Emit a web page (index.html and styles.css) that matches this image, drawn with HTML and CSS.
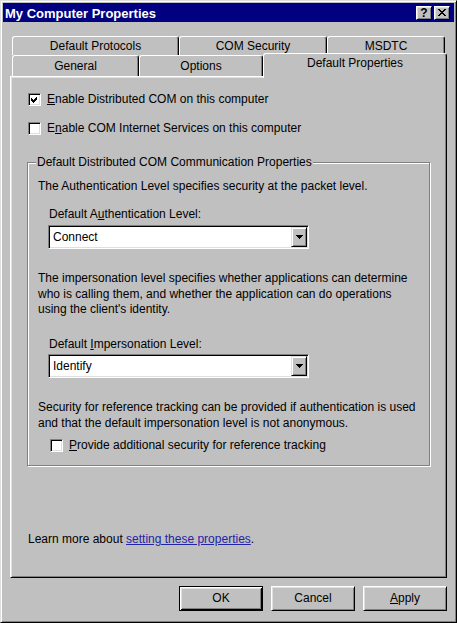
FILE: index.html
```html
<!DOCTYPE html>
<html lang="en">
<head>
<meta charset="utf-8">
<title>My Computer Properties</title>
<link rel="stylesheet" href="styles.css">
</head>
<body>
<div class="window">
  <div class="titlebar">
    <span class="title">My Computer Properties</span>
    <div class="tb-buttons">
      <span class="tbtn help">?</span>
      <span class="tbtn close"><svg width="8" height="7" viewBox="0 0 8 7" shape-rendering="crispEdges"><path d="M0 0h2v1h1v1h2v-1h1v-1h2v1h-1v1h-1v1h-1v1h1v1h1v1h1v1h-2v-1h-1v-1h-2v1h-1v1h-2v-1h1v-1h1v-1h1v-1h-1v-1h-1v-1h-1z" fill="#000"/></svg></span>
    </div>
  </div>
  <div class="client">
    <div class="tabs">
      <div class="tabrow back">
        <div class="tab w-protocols">Default Protocols</div>
        <div class="tab w-security">COM Security</div>
        <div class="tab w-msdtc">MSDTC</div>
      </div>
      <div class="tabrow front">
        <div class="tab w-general">General</div>
        <div class="tab w-options">Options</div>
        <div class="tab selected w-defprops">Default Properties</div>
      </div>
    </div>
    <div class="panel">
      <div class="check-row cb-top">
        <span class="checkbox"><svg width="11" height="11" viewBox="0 0 11 11" shape-rendering="crispEdges"><polygon points="2,4 4,6 8,2 8,5 4,9 2,7" fill="#000"/></svg></span>
        <span class="label"><u>E</u>nable Distributed COM on this computer</span>
      </div>
      <div class="check-row cb-second">
        <span class="checkbox"></span>
        <span class="label">E<u>n</u>able COM Internet Services on this computer</span>
      </div>
      <fieldset class="group">
        <legend>Default Distributed COM Communication Properties</legend>
        <p class="text p-auth">The Authentication Level specifies security at the packet level.</p>
        <div class="field-label fl-auth">Default A<u>u</u>thentication Level:</div>
        <div class="combo combo-auth">
          <span class="combo-value">Connect</span>
          <span class="combo-btn"><svg width="7" height="4" viewBox="0 0 7 4" shape-rendering="crispEdges"><path d="M0 0h7v1h-1v1h-1v1h-1v1h-1v-1h-1v-1h-1v-1h-1z" fill="#000"/></svg></span>
        </div>
        <p class="text p-imp">The impersonation level specifies whether applications can determine who is calling them, and whether the application can do operations using the client's identity.</p>
        <div class="field-label fl-imp">Default <u>I</u>mpersonation Level:</div>
        <div class="combo combo-imp">
          <span class="combo-value">Identify</span>
          <span class="combo-btn"><svg width="7" height="4" viewBox="0 0 7 4" shape-rendering="crispEdges"><path d="M0 0h7v1h-1v1h-1v1h-1v1h-1v-1h-1v-1h-1v-1h-1z" fill="#000"/></svg></span>
        </div>
        <p class="text p-sec">Security for reference tracking can be provided if authentication is used and that the default impersonation level is not anonymous.</p>
        <div class="check-row cb-ref">
          <span class="checkbox"></span>
          <span class="label"><u>P</u>rovide additional security for reference tracking</span>
        </div>
      </fieldset>
      <p class="learn">Learn more about <a class="link" href="#">setting these properties</a>.</p>
    </div>
    <div class="buttons">
      <span class="btn default">OK</span>
      <span class="btn">Cancel</span>
      <span class="btn"><u>A</u>pply</span>
    </div>
  </div>
</div>
</body>
</html>
```

FILE: styles.css
```css
* { box-sizing: border-box; }
html, body { margin: 0; padding: 0; }
body {
  width: 457px;
  height: 623px;
  overflow: hidden;
  background: #c0c0c0;
  font-family: "Liberation Sans", Arial, sans-serif;
  font-size: 12px;
  color: #000;
}
u { text-decoration: underline; text-underline-offset: 1px; }

.window {
  width: 457px;
  height: 623px;
  background: #c0c0c0;
  border: 1px solid;
  border-color: #dfdfdf #000 #000 #dfdfdf;
  box-shadow: inset 1px 1px #fff, inset -1px -1px #808080;
  padding: 2px;
  display: flex;
  flex-direction: column;
}

.titlebar {
  height: 19px;
  background: #000080;
  display: flex;
  align-items: center;
  justify-content: space-between;
  padding: 0 4px 0 2px;
}
.title {
  color: #fff;
  font-weight: bold;
  font-size: 13px;
  line-height: 19px;
  padding-top: 2px;
}
.tb-buttons { display: flex; gap: 2px; }
.tbtn {
  width: 16px;
  height: 14px;
  background: #c0c0c0;
  border: 1px solid;
  border-color: #fff #000 #000 #fff;
  box-shadow: inset 1px 1px #dfdfdf, inset -1px -1px #808080;
  display: flex;
  align-items: center;
  justify-content: center;
}
.help {
  font-weight: bold;
  font-size: 12px;
  line-height: 12px;
}

.client {
  flex: 1;
  display: flex;
  flex-direction: column;
  padding: 14px 7px 0 7px;
}

.tabs { display: flex; flex-direction: column; margin-left: 2px; }
.tabrow { display: flex; }
.tabrow.back { height: 19px; }
.tabrow.front { height: 21px; align-items: flex-end; }
.tab {
  background: #c0c0c0;
  border-top: 1px solid #fff;
  border-left: 1px solid #fff;
  border-right: 1px solid #000;
  border-radius: 3px 3px 0 0;
  box-shadow: inset -1px 0 #808080;
  text-align: center;
  white-space: nowrap;
}
.back .tab { height: 19px; line-height: 18px; }
.front .tab { height: 21px; line-height: 20px; }
.front .tab.selected {
  height: 25px;
  line-height: 19px;
  margin-bottom: -2px;
  position: relative;
  z-index: 2;
}
.w-protocols { width: 167px; }
.w-security { width: 148px; }
.w-msdtc { width: 118px; }
.w-general { width: 127px; }
.w-options { width: 124px; }
.w-defprops { width: 184px; }

.panel {
  height: 502px;
  border: 1px solid;
  border-color: #fff #000 #000 #fff;
  box-shadow: inset 1px 1px #dfdfdf, inset -1px -1px #808080;
  display: flex;
  flex-direction: column;
  align-items: flex-start;
}

.check-row {
  display: flex;
  align-items: center;
  gap: 6px;
  height: 15px;
  line-height: 15px;
  white-space: nowrap;
}
.cb-top { margin: 15px 0 0 17px; }
.cb-second { margin: 14px 0 0 17px; }
.cb-ref { margin: 7px 0 0 12px; }
.checkbox {
  width: 13px;
  height: 13px;
  flex: none;
  background: #fff;
  border: 1px solid;
  border-color: #808080 #fff #fff #808080;
  box-shadow: inset 1px 1px #000, inset -1px -1px #dfdfdf;
}
.checkbox svg { display: block; }

.group {
  margin: 19px 0 0 16px;
  width: 403px;
  min-width: 0;
  padding: 9px 0 12px 10px;
  border: 1px solid #808080;
  box-shadow: inset 1px 1px #fff, 1px 1px #fff;
}
.group legend {
  padding: 0 1px;
  margin-left: -2px;
  line-height: 15px;
  background: #c0c0c0;
}
.text { margin: 0; line-height: 15px; }
.p-imp { margin-top: 22px; line-height: 15.5px; height: 47px; width: 385px; }
.p-sec { margin-top: 21px; line-height: 16px; width: 390px; }
.field-label { margin-left: 11px; line-height: 15px; }
.fl-auth { margin-top: 13px; }
.fl-imp { margin-top: 19px; }

.combo {
  margin-left: 10px;
  width: 261px;
  height: 24px;
  background: #fff;
  border: 1px solid;
  border-color: #808080 #fff #fff #808080;
  box-shadow: inset 1px 1px #000, inset -1px -1px #dfdfdf;
  padding: 1px;
  display: flex;
  align-items: center;
}
.combo-auth { margin-top: 3px; }
.combo-imp { margin-top: 2px; }
.combo-value { padding-left: 3px; line-height: 15px; }
.combo-btn {
  margin-left: auto;
  width: 16px;
  height: 20px;
  background: #c0c0c0;
  border: 1px solid;
  border-color: #dfdfdf #000 #000 #dfdfdf;
  box-shadow: inset 1px 1px #fff, inset -1px -1px #808080;
  display: flex;
  align-items: center;
  justify-content: center;
}
.combo-btn svg { display: block; }

.learn {
  margin: 66px 0 0 17px;
  line-height: 15px;
}
.link { color: #2323a8; text-decoration: underline; }

.buttons {
  margin-top: 8px;
  display: flex;
  justify-content: flex-end;
  gap: 8px;
}
.btn {
  width: 84px;
  height: 25px;
  border: 1px solid;
  border-color: #fff #000 #000 #fff;
  box-shadow: inset 1px 1px #dfdfdf, inset -1px -1px #808080;
  display: flex;
  align-items: center;
  justify-content: center;
  line-height: 15px;
}
.btn.default {
  border-color: #000;
  box-shadow: inset 1px 1px #fff, inset -1px -1px #000, inset 2px 2px #dfdfdf, inset -2px -2px #808080;
}
```
